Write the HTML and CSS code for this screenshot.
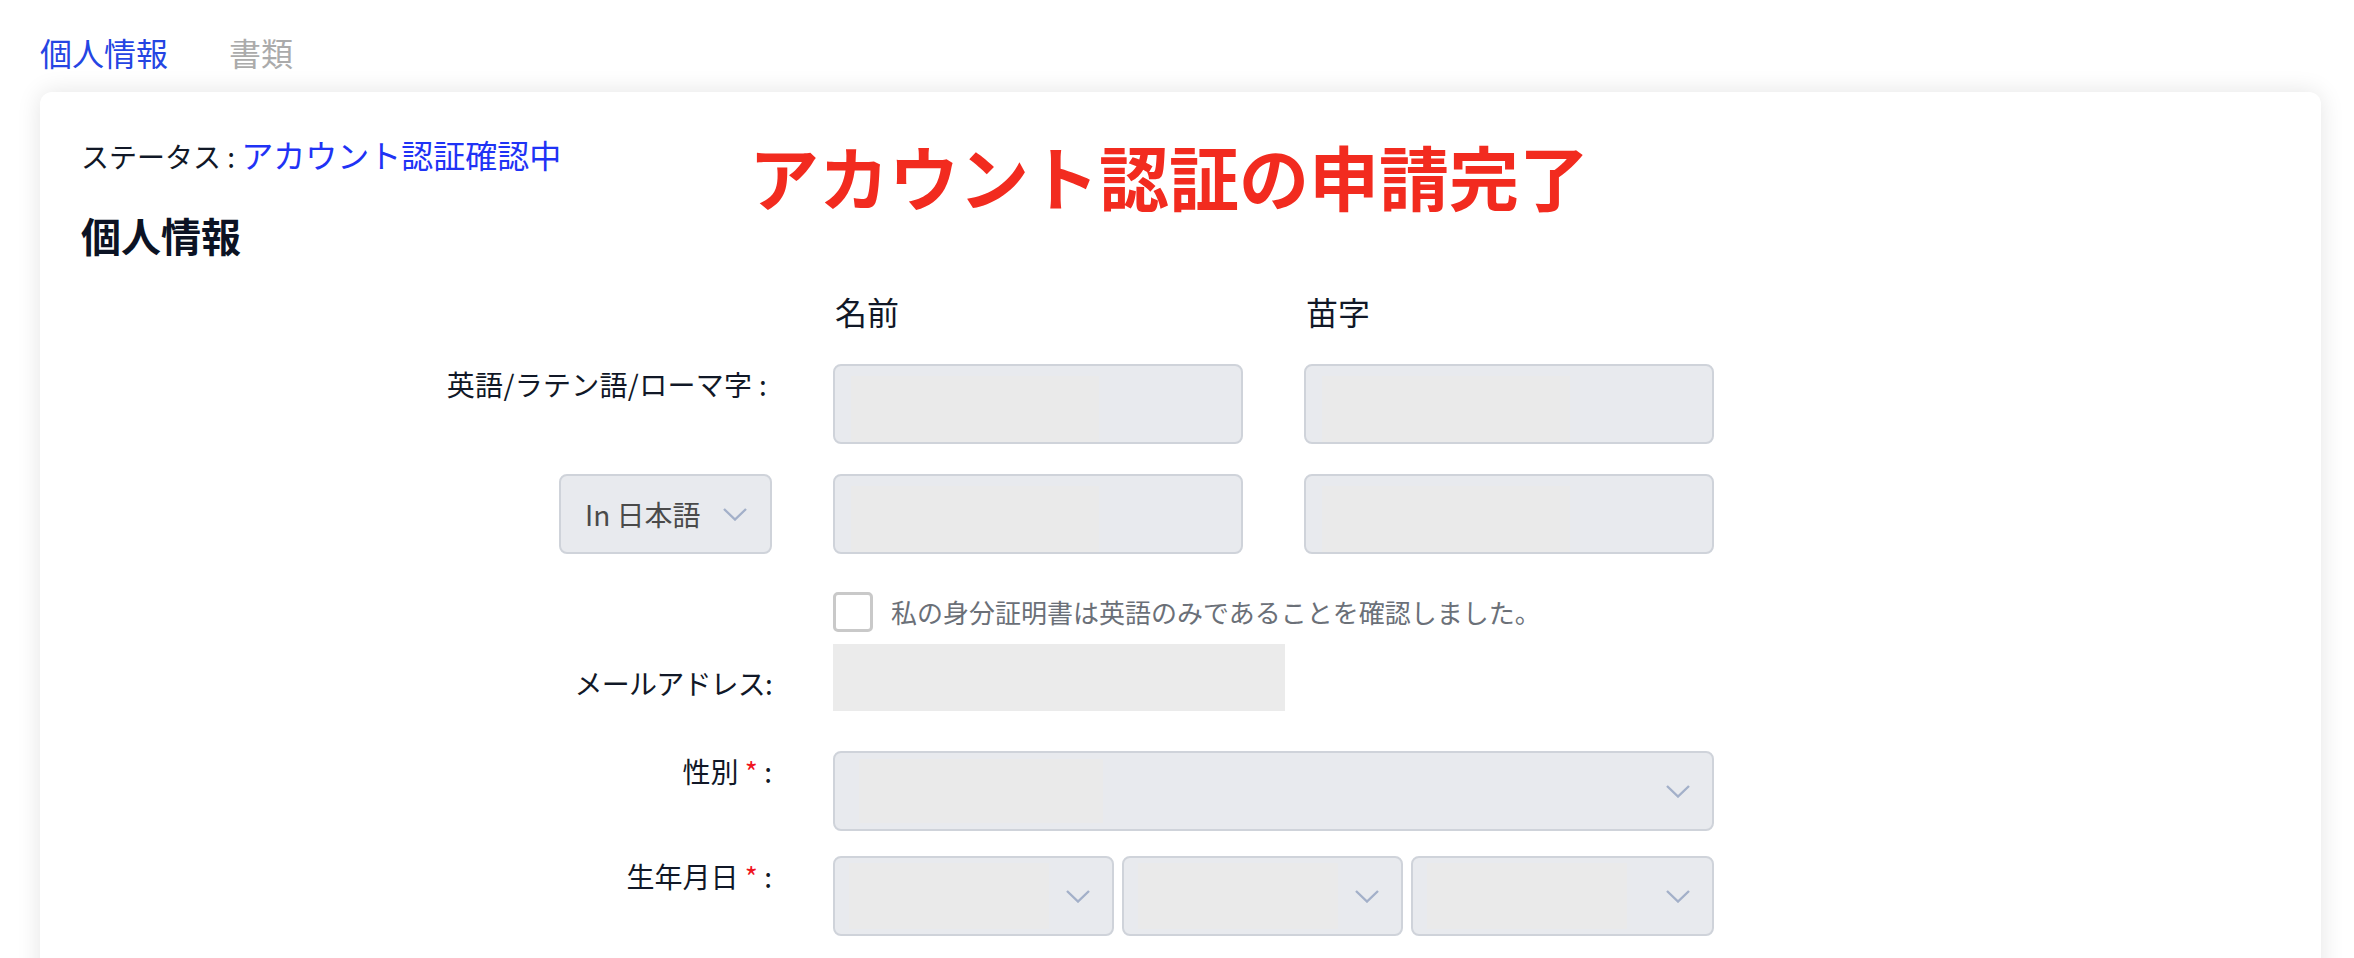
FILE: index.html
```html
<!DOCTYPE html>
<html lang="ja">
<head>
<meta charset="utf-8">
<title>個人情報</title>
<link rel="stylesheet" href="styles.css">
</head>
<body>
<!-- tabs above the card -->
<nav class="tabs">
	<span class="tab active">個人情報</span>
	<span class="tab">書類</span>
</nav>

<main class="card">
	<p class="status">ステータス : <span class="status-value">アカウント認証確認中</span></p>
	<!-- red note laid over the card -->
	<p class="stamp">アカウント認証の申請完了</p>
	<h2 class="section-title">個人情報</h2>

	<div class="row head-row">
		<div></div>
		<div class="col-head">名前</div>
		<div class="col-head">苗字</div>
	</div>

	<div class="row row-en">
		<div class="label en-label">英語/ラテン語/ローマ字 :</div>
		<div class="field"><div class="blur"></div></div>
		<div class="field"><div class="blur"></div></div>
	</div>

	<div class="row row-ja">
		<div class="field select lang-select">
			<span>In 日本語</span>
			<svg class="chev" width="24" height="13" viewBox="0 0 24 13"><polyline points="1,1 12,11.5 23,1" fill="none" stroke="#a3b0c9" stroke-width="2.4"/></svg>
		</div>
		<div class="field"><div class="blur"></div></div>
		<div class="field"><div class="blur"></div></div>
	</div>

	<div class="row row-check">
		<div></div>
		<div class="check-line">
			<span class="checkbox"></span>
			<span>私の身分証明書は英語のみであることを確認しました。</span>
		</div>
	</div>

	<div class="row row-mail">
		<div class="label mail-label">メールアドレス:</div>
		<div class="mail-box"></div>
	</div>

	<div class="row row-gender">
		<div class="label">性別 <span class="req">*</span> :</div>
		<div class="field select wide">
			<div class="blur gender-blur"></div>
			<svg class="chev" width="24" height="13" viewBox="0 0 24 13"><polyline points="1,1 12,11.5 23,1" fill="none" stroke="#a3b0c9" stroke-width="2.4"/></svg>
		</div>
	</div>

	<div class="row row-birth">
		<div class="label">生年月日 <span class="req">*</span> :</div>
		<div class="dates wide">
			<div class="field select">
				<div class="blur date-blur"></div>
				<svg class="chev" width="24" height="13" viewBox="0 0 24 13"><polyline points="1,1 12,11.5 23,1" fill="none" stroke="#a3b0c9" stroke-width="2.4"/></svg>
			</div>
			<div class="field select">
				<div class="blur date-blur"></div>
				<svg class="chev" width="24" height="13" viewBox="0 0 24 13"><polyline points="1,1 12,11.5 23,1" fill="none" stroke="#a3b0c9" stroke-width="2.4"/></svg>
			</div>
			<div class="field select">
				<div class="blur date-blur"></div>
				<svg class="chev" width="24" height="13" viewBox="0 0 24 13"><polyline points="1,1 12,11.5 23,1" fill="none" stroke="#a3b0c9" stroke-width="2.4"/></svg>
			</div>
		</div>
	</div>
</main>
</body>
</html>
```

FILE: styles.css
```css
body {
	margin: 0;
	background-color: #fff;
	color: #111827;
	font-family: "Noto Sans CJK JP", "Noto Sans", sans-serif;
	overflow: hidden;
}
.tabs {
	display: flex;
	gap: 61px;
	padding: 36px 0 24px 40px;
	font-size: 32px;
	line-height: 32px;
}
.tab {
	color: #ababab;
}
.tab.active {
	color: #2545e3;
}
.card {
	position: relative;
	box-sizing: border-box;
	width: 2281px;
	height: 900px;
	margin-left: 40px;
	padding: 44px 0 0 41px;
	background-color: #fff;
	border-radius: 12px;
	box-shadow: 0 0 24px rgba(0, 0, 0, 0.11);
}
.status {
	height: 40px;
	margin: 0;
	font-size: 28px;
	line-height: 40px;
}
.status-value {
	font-size: 32px;
	line-height: 32px;
	color: #1f33f5;
}
.stamp {
	position: absolute;
	left: 709px;
	top: 49px;
	margin: 0;
	font-size: 70px;
	line-height: 70px;
	font-weight: 700;
	color: #f22b1f;
}
.section-title {
	margin: 31px 0 0;
	font-size: 40px;
	line-height: 56px;
	font-weight: 700;
	color: #0c1324;
}

/* form rows share one column template */
.row {
	display: grid;
	grid-template-columns: 691px 410px 410px;
	column-gap: 61px;
	align-items: start;
}
.head-row {
	margin-top: 28px;
	font-size: 32px;
	line-height: 40px;
}
.col-head {
	padding-left: 2px;
}
.row-en { margin-top: 33px; }
.row-ja { margin-top: 30px; }
.row-check { margin-top: 38px; }
.row-mail { margin-top: 12px; }
.row-gender { margin-top: 40px; }
.row-birth { margin-top: 25px; }

.label {
	font-size: 28px;
	line-height: 40px;
	text-align: right;
}
.en-label {
	padding-right: 5px;
	letter-spacing: 0.3px;
}
.mail-label {
	margin-top: 19px;
	letter-spacing: -0.8px;
}
.req {
	color: #f0141e;
}
.field {
	box-sizing: border-box;
	height: 80px;
	border: 2px solid #cfd3da;
	border-radius: 8px;
	background-color: #e8eaee;
	overflow: hidden;
}
.blur {
	width: 248px;
	height: 66px;
	margin: 10px 0 0 16px;
	background-color: #eaeaea;
}
.wide {
	grid-column: 2 / 4;
}
.select {
	display: flex;
	align-items: center;
	justify-content: space-between;
	padding-right: 22px;
}
.select .blur {
	margin-top: 0;
}
.gender-blur {
	width: 244px;
	height: 64px;
	margin-left: 24px;
}
.date-blur {
	width: 200px;
	height: 66px;
	margin-left: 14px;
}
.chev {
	flex: none;
}
.lang-select {
	justify-self: end;
	width: 213px;
	padding-left: 24px;
	justify-content: flex-start;
	gap: 22px;
	font-size: 28px;
	color: #4a4a4a;
}
.check-line {
	grid-column: 2 / 4;
	display: flex;
	align-items: center;
	gap: 18px;
	font-size: 26px;
	line-height: 40px;
	color: #6b7078;
}
.checkbox {
	box-sizing: border-box;
	width: 40px;
	height: 40px;
	border: 3px solid #c9c9c9;
	border-radius: 5px;
}
.mail-box {
	width: 452px;
	height: 67px;
	background-color: #ebebeb;
}
.dates {
	display: grid;
	grid-template-columns: 281px 281px 1fr;
	gap: 8px;
}
```
